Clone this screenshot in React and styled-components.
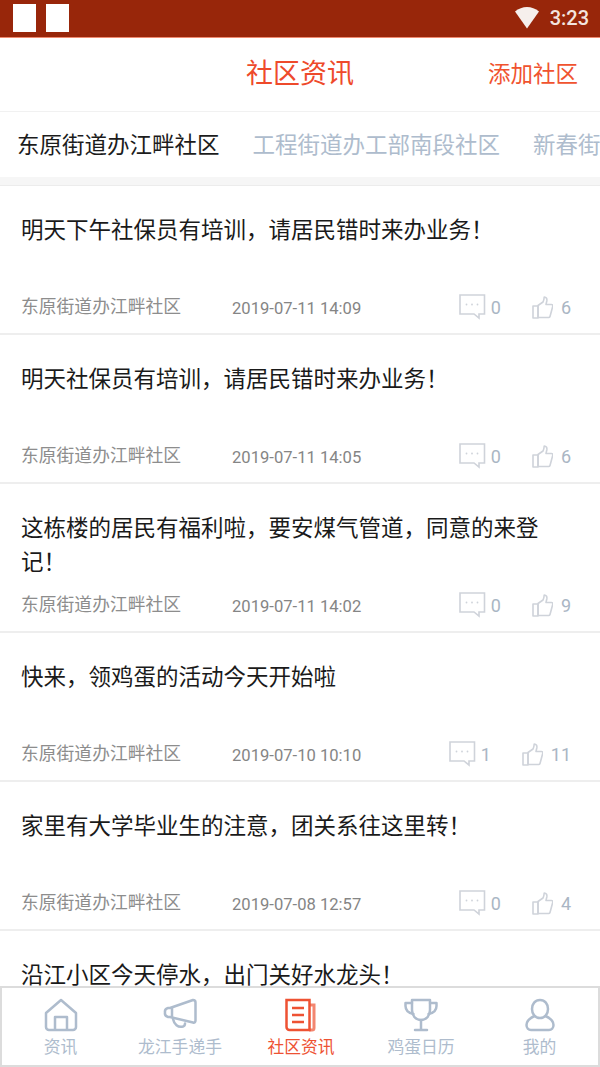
import React from 'react';
import styled, { createGlobalStyle } from 'styled-components';

const Global = createGlobalStyle`
  html, body { margin: 0; padding: 0; background: #fff; }
  * { box-sizing: border-box; }
  body { font-family: "Noto Sans CJK SC", "Noto Sans", Roboto, sans-serif; }
`;
const Page = styled.div`position: relative; width: 600px; height: 1067px; overflow: hidden; background: #fff; display: flex; flex-direction: column;`;
const StatusBar = styled.div`height: 38px; flex: none; background: #98260a; border-bottom: 1px solid #f08a70; display: flex; align-items: center; padding: 0 11px 1px 13px;`;
const Square = styled.div`width: 23px; height: 28px; background: #fff; margin-right: 10px;`;
const StatusRight = styled.div`margin-left: auto; display: flex; align-items: center; gap: 11px; color: #f3e4df; font: 500 20px Roboto, sans-serif;`;
const Header = styled.div`height: 74px; flex: none; display: flex; align-items: center; justify-content: center; position: relative; border-bottom: 1px solid #f1f1f1;`;
const Title = styled.div`font-size: 27px; line-height: 36px; color: #ee4a2b; margin-top: -6px;`;
const HeaderAction = styled.div`position: absolute; right: 22px; top: 18px; font-size: 22.5px; line-height: 32px; color: #f0532f;`;
const Tabs = styled.div`height: 65px; flex: none; display: flex; align-items: center; overflow: hidden; white-space: nowrap; padding: 0 0 4px 17px; gap: 33px;`;
const Tab = styled.div`font-size: 22.5px; line-height: 30px; flex: none; color: ${p => p.$active ? '#1c1c1c' : '#aebccd'};`;
const Gap = styled.div`height: 9px; flex: none; background: #f6f6f6; border-bottom: 1px solid #ececec;`;
const Item = styled.div`height: 149px; flex: none; padding: 25px 40px 0 21px; border-bottom: 2px solid #eeeeee; display: flex; flex-direction: column;`;
const ItemTitle = styled.div`font-size: 22.5px; line-height: 34px; height: 70px; color: #1a1a1a;`;
const Meta = styled.div`display: flex; align-items: center; height: 30px; margin: 9px -11px 0 0;`;
const Source = styled.span`font-size: 17.8px; color: #8d8d8d; width: 211px; flex: none;`;
const DateText = styled.span`font: 16.6px Roboto, sans-serif; color: #858585; margin-top: 6px;`;
const Counts = styled.div`margin-left: auto; display: flex; align-items: center; color: #aab6c4; font: 18px Roboto, sans-serif; padding-top: 4px;`;
const Count = styled.span`margin-left: ${p => p.$m}px;`;
const LikeGroup = styled.div`display: flex; align-items: center; margin-left: 31px;`;
const Nav = styled.div`position: absolute; left: 0; right: 0; bottom: 0; height: 81px; background: #fff; border: 2px solid #dcdcdc; display: grid; grid-template-columns: 117px 122px 120px 120px 1fr;`;
const NavItem = styled.div`display: flex; flex-direction: column; align-items: center; padding-top: 9px; color: ${p => p.$active ? '#ee5233' : '#aebccd'};`;
const NavIcon = styled.div`height: 35px; display: flex; align-items: center; justify-content: center;`;
const NavLabel = styled.div`font-size: 16.8px; line-height: 24px; margin-top: 2px;`;

const Comment = () => (
  <svg width="27" height="26" viewBox="0 0 27 26" fill="none" stroke="#cfd3da" strokeWidth="1.6">
    <path d="M1 1h24.500v19h-5.500v4l-5-4H1z" />
    <circle cx="7.500" cy="10.500" r="0.900" fill="#cfd3da" stroke="none" />
    <circle cx="13" cy="10.500" r="0.900" fill="#cfd3da" stroke="none" />
    <circle cx="18.500" cy="10.500" r="0.900" fill="#cfd3da" stroke="none" />
  </svg>
);
const Like = () => (
  <svg width="21" height="23" viewBox="0 0 21 23" fill="none" stroke="#cfd3da" strokeWidth="1.6" strokeLinejoin="round">
    <path d="M6 9.500 11 6c1-1.500 1-3 1.200-5 2.300 0 3 2 2.600 4l-.8 3.500h5.500c1 0 1.500 1 1.200 2l-2.700 10c-.2.700-.7 1-1.400 1H6z" />
    <path d="M1 10h5v12H1z" />
  </svg>
);
const Wifi = () => <svg width="24" height="22" viewBox="0 0 24 22"><path d="M0 4.500C7-1.500 17-1.500 24 4.500L12 21.500z" fill="#f6efec" /></svg>;
const Home = () => (
  <svg width="34" height="34" viewBox="0 0 34 34" fill="none" stroke="currentColor" strokeWidth="2.500" strokeLinejoin="round">
    <path d="M2 15 17 2l15 13v14a3 3 0 0 1-3 3H5a3 3 0 0 1-3-3z" />
    <path d="M11 32V19h12v13" />
  </svg>
);
const Horn = () => (
  <svg width="34" height="34" viewBox="0 0 34 34" fill="none" stroke="currentColor" strokeWidth="2.500" strokeLinejoin="round" strokeLinecap="round">
    <path d="M7 10 30 2c1.500 0 2.500 1 2.500 2.500v18c0 1.500-1 2.500-2.500 2L7 19H5a4 4 0 0 1-3-4.500A4 4 0 0 1 5 10z" />
    <path d="M9 10v9" />
    <path d="M10 21c1 5 5 9 10 7.500 1.500-.5 2-1.500 2-3" />
  </svg>
);
const News = () => (
  <svg width="34" height="34" viewBox="0 0 34 34" fill="none" stroke="currentColor" strokeWidth="2.500">
    <path d="M2.500 2h23v30h-20a3 3 0 0 1-3-3z" />
    <path d="M8 10h12M8 17h12M8 24h12" strokeWidth="2.500" />
    <path d="M26 7h4v23a2 2 0 0 1-2 2H25" strokeWidth="3" opacity=".7" />
  </svg>
);
const Cup = () => (
  <svg width="34" height="34" viewBox="0 0 34 34" fill="none" stroke="currentColor" strokeWidth="2.500" strokeLinejoin="round" strokeLinecap="round">
    <path d="M8 2h18v10c0 6-4 10-9 10S8 18 8 12z" />
    <path d="M8 5H1.500v3c0 4 3 7 8 8M26 5h6.500v3c0 4-3 7-8 8" />
    <path d="M17 22v10M11 32h12" />
  </svg>
);
const User = () => (
  <svg width="30" height="34" viewBox="0 0 30 34" fill="none" stroke="currentColor" strokeWidth="2.500" strokeLinejoin="round">
    <path d="M15 2c5 0 8 4 8 9s-3 9-8 9-8-4-8-9 3-9 8-9z" />
    <path d="M9.500 18C5 20 1.500 23 1.500 27c0 3 2 5 4.500 5h18c2.500 0 4.500-2 4.500-5 0-4-3.500-7-8-9" />
  </svg>
);

const items = [
  { t: '明天下午社保员有培训，请居民错时来办业务！', d: '2019-07-11 14:09', c: 0, l: 6 },
  { t: '明天社保员有培训，请居民错时来办业务！', d: '2019-07-11 14:05', c: 0, l: 6 },
  { t: '这栋楼的居民有福利啦，要安煤气管道，同意的来登记！', d: '2019-07-11 14:02', c: 0, l: 9 },
  { t: '快来，领鸡蛋的活动今天开始啦', d: '2019-07-10 10:10', c: 1, l: 11 },
  { t: '家里有大学毕业生的注意，团关系往这里转！', d: '2019-07-08 12:57', c: 0, l: 4 },
  { t: '沿江小区今天停水，出门关好水龙头！' },
];
const nav = [
  ['资讯', <Home />], ['龙江手递手', <Horn />], ['社区资讯', <News />, true], ['鸡蛋日历', <Cup />], ['我的', <User />],
];

export default function App() {
  return (
    <Page>
      <Global />
      <StatusBar>
        <Square /><Square />
        <StatusRight><Wifi /><span>3:23</span></StatusRight>
      </StatusBar>
      <Header>
        <Title>社区资讯</Title>
        <HeaderAction>添加社区</HeaderAction>
      </Header>
      <Tabs>
        <Tab $active>东原街道办江畔社区</Tab>
        <Tab>工程街道办工部南段社区</Tab>
        <Tab>新春街</Tab>
      </Tabs>
      <Gap />
      {items.map(it => (
        <Item key={it.t}>
          <ItemTitle>{it.t}</ItemTitle>
          {it.d && (
            <Meta>
              <Source>东原街道办江畔社区</Source>
              <DateText>{it.d}</DateText>
              <Counts>
                <Comment /><Count $m={5}>{it.c}</Count>
                <LikeGroup><Like /><Count $m={8}>{it.l}</Count></LikeGroup>
              </Counts>
            </Meta>
          )}
        </Item>
      ))}
      <Nav>
        {nav.map(([label, icon, active]) => (
          <NavItem key={label} $active={active}>
            <NavIcon>{icon}</NavIcon>
            <NavLabel>{label}</NavLabel>
          </NavItem>
        ))}
      </Nav>
    </Page>
  );
}
